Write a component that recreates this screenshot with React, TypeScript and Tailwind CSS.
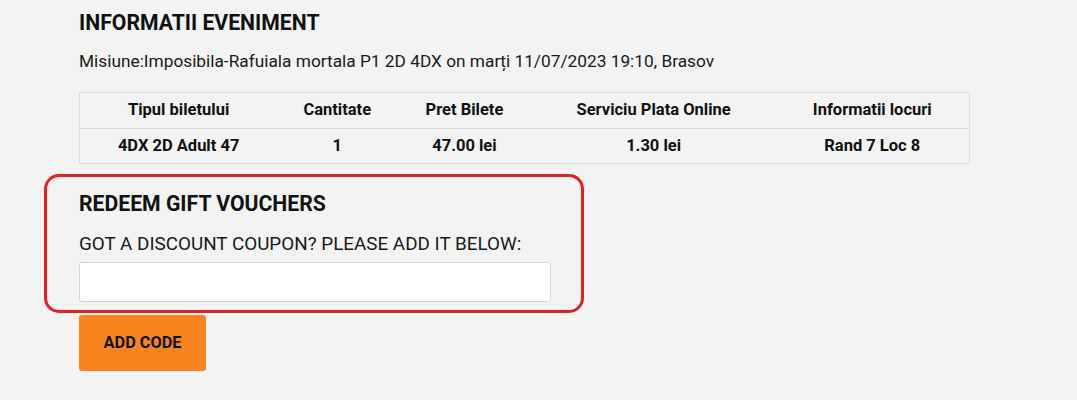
import React from 'react';

const headers = ['Tipul biletului', 'Cantitate', 'Pret Bilete', 'Serviciu Plata Online', 'Informatii locuri'];
const row = ['4DX 2D Adult 47', '1', '47.00 lei', '1.30 lei', 'Rand 7 Loc 8'];

const App: React.FC = () => {
  return (
    <div className="min-h-[400px] bg-[#f3f3f3] font-['Roboto',sans-serif] text-[#111]">
      <div className="w-[891px] ml-[79px] pt-[10px]">
        <h2 className="text-[21.2px] leading-[26px] font-bold">INFORMATII EVENIMENT</h2>
        <p className="mt-[15px] text-[17.3px] leading-[20px] text-[#1a1a1a]">
          Misiune:Imposibila-Rafuiala mortala P1 2D 4DX on marți 11/07/2023 19:10, Brasov
        </p>

        <table className="mt-[21px] w-full border-collapse border border-[#dcdcdc] text-[16.5px] font-bold">
          <thead>
            <tr>
              {headers.map((h) => (
                <th key={h} className="h-[36px] border-b border-[#dcdcdc] px-2 text-center font-bold">{h}</th>
              ))}
            </tr>
          </thead>
          <tbody>
            <tr>
              {row.map((c, i) => (
                <td key={i} className="h-[35px] px-2 text-center">{c}</td>
              ))}
            </tr>
          </tbody>
        </table>

        <div className="relative mt-[10px]">
          {/* annotation frame */}
          <div className="absolute left-[-35px] top-0 w-[540px] h-[139px] border-[3px] border-[#ec1c24] rounded-[15px] pointer-events-none" />
          <div className="pt-[17px]">
            <h3 className="text-[21.2px] leading-[26px] font-bold">REDEEM GIFT VOUCHERS</h3>
            <p className="mt-[16px] text-[18.85px] leading-[23px] text-[#1a1a1a]">GOT A DISCOUNT COUPON? PLEASE ADD IT BELOW:</p>
            <input
              type="text"
              className="mt-[6px] block w-[472px] h-[40px] bg-white border border-[#d4d4d4] rounded-[3px] px-2 outline-none"
            />
          </div>
          <button className="mt-[13px] w-[127px] h-[56px] bg-[#f7841e] rounded-[3px] text-[16.3px] font-bold text-[#111]">
            ADD CODE
          </button>
        </div>
      </div>
    </div>
  );
};

export default App;
